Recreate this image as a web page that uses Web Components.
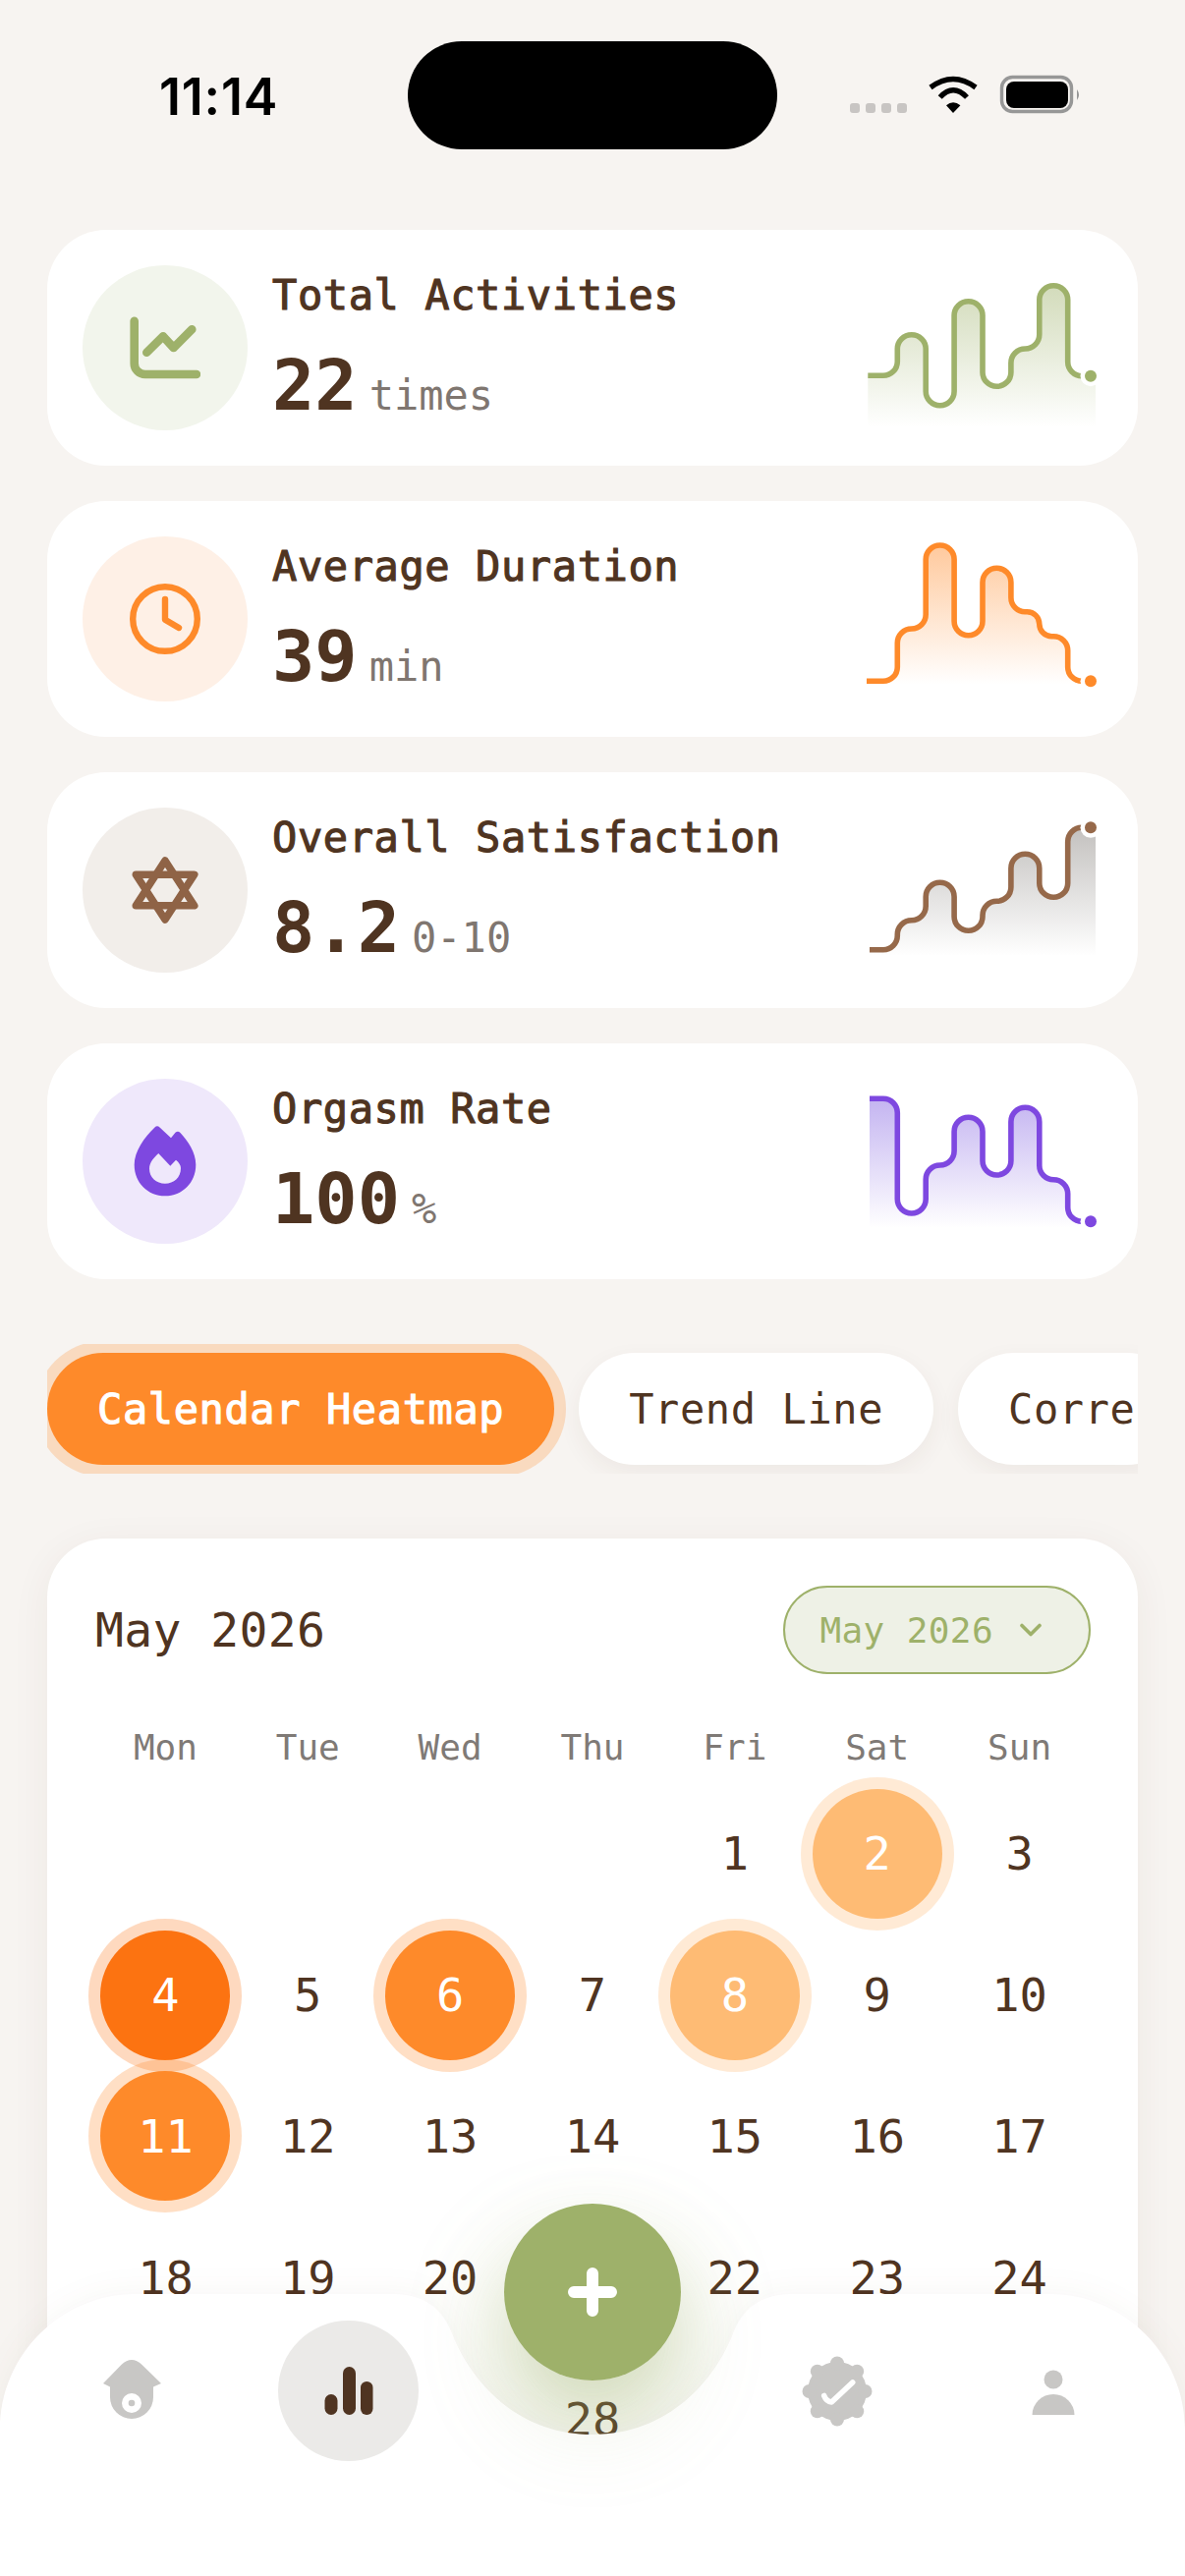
<!DOCTYPE html>
<html lang="en">
<head>
<meta charset="utf-8">
<title>Stats</title>
<style>
  html, body { margin: 0; padding: 0; }
  body {
    width: 1206px;
    height: 2622px;
    overflow: hidden;
    position: relative;
    background: #f7f4f1;
    color: #4f3421;
    font-family: "DejaVu Sans Mono", "Liberation Mono", monospace;
  }
  main { display: block; padding: 0 48px; }
  svg { display: block; }
</style>
</head>
<body>
<status-bar></status-bar>
<main>
  <stat-card label="Total Activities" value="22" unit="times" tint="#f2f5ec">
    <svg slot="icon" width="72" height="72" viewBox="0 0 72 72" fill="none" stroke="#9eb16a" stroke-width="8.6" stroke-linecap="round" stroke-linejoin="round">
      <path d="M4.7 8.7V52a11 11 0 0 0 11 11H68"/>
      <path d="M17.3 40.7L34 24.3 44.7 36 63.3 17.3"/>
    </svg>
    <spark-line slot="chart" color="#9eb16a" fill="#9eb16a" levels="118.3 76.7 148.7 42.7 129.3 91 26.7 118.7" start="1.3" bottom="171"></spark-line>
  </stat-card>
  <stat-card label="Average Duration" value="39" unit="min" tint="#fef0e6">
    <svg slot="icon" width="72" height="72" viewBox="0 0 72 72" fill="none" stroke="#fe8a2a" stroke-width="6.4" stroke-linecap="round" stroke-linejoin="round">
      <circle cx="36" cy="36" r="32.8"/>
      <path d="M36 16V36.7L50 45"/>
    </svg>
    <spark-line slot="chart" color="#fe8a2a" fill="#fe8a2a" levels="153.3 100 15 106.7 38.3 82.7 107.7 153.3" start="0" bottom="156.7"></spark-line>
  </stat-card>
  <stat-card label="Overall Satisfaction" value="8.2" unit="0-10" tint="#f2eeea">
    <svg slot="icon" width="72" height="72" viewBox="0 0 72 72" fill="none" stroke="#8f6346" stroke-width="7.6" stroke-linejoin="round">
      <path d="M36 6L65.7 51.7H6.3Z"/>
      <path d="M36 66L65.7 20.3H6.3Z"/>
    </svg>
    <spark-line slot="chart" color="#96694a" fill="#7d7873" levels="150.7 120.7 82.3 131.3 101.3 53.3 97.3 26.3" start="3" bottom="157"></spark-line>
  </stat-card>
  <stat-card label="Orgasm Rate" value="100" unit="%" tint="#efe8fb">
    <svg slot="icon" width="72" height="72" viewBox="0 0 72 72">
      <path fill="#7e48e0" fill-rule="evenodd" d="M25.5 1.5Q28 -.8 30.5 1.5L42 12.3 46.5 6.8Q49 4.5 51.5 7C59 15 67.3 27 67.3 39.5 67.3 58 53.5 71.3 36 71.3S4.7 58 4.7 39.5C4.7 26 15 11.5 25.5 1.5ZM29.3 28C25 32 20 37 20 43.5 20 52.5 27 58.7 36 58.7S52 52.5 52 43C52 40 50 37 47 34.7L41.3 40.7Z"/>
    </svg>
    <spark-line slot="chart" color="#7e48e0" fill="#7e5ce0" levels="26.3 143 94 45.3 104 35.3 108.7 151.3" start="3" bottom="158"></spark-line>
  </stat-card>
  <tab-strip>
    <tab-pill active>Calendar Heatmap</tab-pill>
    <tab-pill>Trend Line</tab-pill>
    <tab-pill clip>Correlation</tab-pill>
  </tab-strip>
  <calendar-card title-text="May 2026" first-offset="4" days="31" heat="2:1,4:3,6:2,8:1,11:2"></calendar-card>
</main>
<bottom-nav>
  <nav-item>
    <svg width="72" height="72" viewBox="0 0 72 72">
      <path fill="#c8c7c5" d="M6 28L24.5 9Q35 -1 45.5 9L65 28 57 31.5V42A22 22 0 0 1 13 42V31.5Z"/>
      <circle cx="35" cy="48" r="10" fill="#fff"/>
      <circle cx="35" cy="48" r="3.3" fill="#c8c7c5"/>
    </svg>
  </nav-item>
  <nav-item active>
    <svg width="72" height="72" viewBox="0 0 72 72" fill="#4f3421">
      <rect x="11.5" y="39" width="13" height="21" rx="6.5"/>
      <rect x="30" y="11" width="13" height="49" rx="6.5"/>
      <rect x="48" y="26" width="12.5" height="34" rx="6.2"/>
    </svg>
  </nav-item>
  <nav-item slot="right">
    <svg width="72" height="72" viewBox="0 0 72 72">
      <g fill="#c8c7c5">
        <circle cx="36" cy="36" r="30"/>
        <circle cx="36" cy="7.5" r="7"/><circle cx="56.2" cy="15.8" r="7"/><circle cx="64.5" cy="36" r="7"/><circle cx="56.2" cy="56.2" r="7"/>
        <circle cx="36" cy="64.5" r="7"/><circle cx="15.8" cy="56.2" r="7"/><circle cx="7.5" cy="36" r="7"/><circle cx="15.8" cy="15.8" r="7"/>
      </g>
      <path d="M22.7 40.5Q25 46.5 30.3 47L51.7 27" fill="none" stroke="#fff" stroke-width="5.6" stroke-linecap="round" stroke-linejoin="round"/>
    </svg>
  </nav-item>
  <nav-item slot="right">
    <svg width="72" height="72" viewBox="0 0 72 72" fill="#c8c7c5">
      <circle cx="36" cy="24" r="9.5"/>
      <path d="M14.5 60A21.5 21 0 0 1 57.5 60Z"/>
    </svg>
  </nav-item>
</bottom-nav>

<script>
class StatusBar extends HTMLElement {
  constructor() {
    super();
    this.attachShadow({ mode: 'open' });
    this.shadowRoot.innerHTML = `
      <style>
      :host { display: grid; grid-template-columns: 1fr 376px 1fr; align-items: center; height: 110px; padding-top: 42px; margin-bottom: 82px; }
      .time { padding: 3px 0 0 162px; font: 600 52px/1 Inter, "Liberation Sans", sans-serif; letter-spacing: .8px; color: #000; }
      .island { height: 110px; border-radius: 55px; background: #000; }
      .right { padding-left: 74px; }
      svg { display: block; }
      </style>
      <div class="time">11:14</div>
      <div class="island"></div>
      <div class="right">
        <svg width="236" height="44" viewBox="865 76 236 44">
          <g fill="#c8c5c3">
            <rect x="865" y="106" width="10" height="10" rx="3"/><rect x="881" y="106" width="10" height="10" rx="3"/>
            <rect x="897" y="106" width="10" height="10" rx="3"/><rect x="913" y="106" width="10" height="10" rx="3"/>
          </g>
          <g fill="none" stroke="#000" stroke-width="5.4">
            <path d="M947 90Q970 73 993 90"/>
            <path d="M956.7 100Q970 85.4 984 100"/>
          </g>
          <path d="M963 108.3Q970 102 977.4 108.3L970 116Z"/>
          <rect x="1019.5" y="79.5" width="71" height="35" rx="11" fill="none" stroke="#979797" stroke-width="3.4"/>
          <rect x="1024" y="84" width="63" height="27" rx="8"/>
          <path d="M1096 92Q1100 97.5 1096 103Z" fill="#979797"/>
        </svg>
      </div>
    `;
  }
}

class StatCard extends HTMLElement {
  constructor() {
    super();
    this.attachShadow({ mode: 'open' });
    const label = this.getAttribute('label');
    const value = this.getAttribute('value');
    const unit = this.getAttribute('unit');
    const tint = this.getAttribute('tint');
    this.shadowRoot.innerHTML = `
      <style>
      :host { display: flex; align-items: center; height: 240px; box-sizing: border-box; padding: 0 36px; margin-bottom: 36px; background: #fff; border-radius: 60px; }
      .badge { width: 168px; height: 168px; border-radius: 50%; flex: none; display: flex; align-items: center; justify-content: center; background: ${tint}; }
      .text { flex: 1; margin-left: 25px; padding-top: 4px; display: flex; flex-direction: column; }
      .label { font-size: 42px; line-height: 52px; letter-spacing: .6px; -webkit-text-stroke: 1.1px currentColor; }
      .line { display: flex; align-items: baseline; gap: 12px; margin-top: 20px; }
      .value { font-size: 72px; line-height: 90px; font-weight: 700; }
      .unit { font-size: 42px; color: #7f7670; }
      </style>
      <div class="badge"><slot name="icon"></slot></div>
      <div class="text">
        <div class="label">${label}</div>
        <div class="line"><span class="value">${value}</span><span class="unit">${unit}</span></div>
      </div>
      <slot name="chart"></slot>
    `;
  }
}

class SparkLine extends HTMLElement {
  static count = 0;

  constructor() {
    super();
    this.attachShadow({ mode: 'open' });
    const levels = this.getAttribute('levels').split(' ').map(Number);
    const color = this.getAttribute('color');
    const fill = this.getAttribute('fill');
    const start = Number(this.getAttribute('start'));
    const bottom = Number(this.getAttribute('bottom'));
    const end = 233;
    const gradId = `grad-${SparkLine.count++}`;

    // steps with rounded corners, the vertical runs sit halfway between data points
    let d = `M${start} ${levels[0]}`;
    for (let i = 0; i < levels.length - 1; i++) {
      const xv = 31.3 + i * 28.9;
      const y = levels[i];
      const ny = levels[i + 1];
      const s = ny > y ? 1 : -1;
      const r = Math.min(14.4, Math.abs(ny - y) / 2);
      d += `H${xv - r}A${r} ${r} 0 0 ${s > 0 ? 1 : 0} ${xv} ${y + s * r}`;
      d += `V${ny - s * r}A${r} ${r} 0 0 ${s > 0 ? 0 : 1} ${xv + r} ${ny}`;
    }
    d += `H${end}`;
    const last = levels[levels.length - 1];

    this.shadowRoot.innerHTML = `
      <style>
      :host { display: block; width: 240px; height: 180px; flex: none; }
      svg { display: block; }
      </style>
      <svg width="240" height="180" viewBox="0 0 240 180">
        <defs>
          <linearGradient id="${gradId}" x1="0" y1="0" x2="0" y2="1">
            <stop offset="0" stop-color="${fill}" stop-opacity=".46"/>
            <stop offset="1" stop-color="${fill}" stop-opacity="0"/>
          </linearGradient>
        </defs>
        <path d="${d}V${bottom}H${start}Z" fill="url(#${gradId})"/>
        <path d="${d}" fill="none" stroke="${color}" stroke-width="5.6"/>
        <circle cx="228" cy="${last}" r="10.5" fill="#fff"/>
        <circle cx="228" cy="${last}" r="6" fill="${color}"/>
      </svg>
    `;
  }
}

class TabStrip extends HTMLElement {
  constructor() {
    super();
    this.attachShadow({ mode: 'open' });
    this.shadowRoot.innerHTML = `
      <style>
      :host { display: flex; gap: 25px; padding: 9px 0; margin: 66px 0; overflow: hidden; }
      </style>
      <slot></slot>
    `;
  }
}

class TabPill extends HTMLElement {
  constructor() {
    super();
    this.attachShadow({ mode: 'open' });
    this.shadowRoot.innerHTML = `
      <style>
      :host { display: flex; align-items: center; flex: none; height: 114px; padding: 0 51px; border-radius: 57px; background: #fff; font-size: 42px; letter-spacing: .6px; box-shadow: 0 8px 24px rgba(80, 50, 30, .06); }
      :host([active]) { background: #fe8a2a; color: #fff; -webkit-text-stroke: 1.1px #fff; box-shadow: 0 0 0 12px rgba(254, 138, 42, .25); }
      :host([clip]) .text { width: 127px; overflow: hidden; }
      .text { white-space: nowrap; }
      </style>
      <div class="text"><slot></slot></div>
    `;
  }
}

class CalDay extends HTMLElement {
  constructor() {
    super();
    this.attachShadow({ mode: 'open' });
    this.shadowRoot.innerHTML = `
      <style>
      :host { display: flex; align-items: center; justify-content: center; font-size: 47px; }
      .dot { width: 132px; height: 132px; border-radius: 50%; display: flex; align-items: center; justify-content: center; }
      :host([level="1"]) .dot { background: #febb74; color: #fff; box-shadow: 0 0 0 12px rgba(254, 187, 116, .3); }
      :host([level="2"]) .dot { background: #fe8a2a; color: #fff; box-shadow: 0 0 0 12px rgba(254, 138, 42, .27); }
      :host([level="3"]) .dot { background: #fc7311; color: #fff; box-shadow: 0 0 0 12px rgba(252, 115, 17, .27); }
      </style>
      <div class="dot"><slot></slot></div>
    `;
  }
}

class CalendarCard extends HTMLElement {
  constructor() {
    super();
    this.attachShadow({ mode: 'open' });
    const title = this.getAttribute('title-text');
    const offset = Number(this.getAttribute('first-offset'));
    const days = Number(this.getAttribute('days'));
    const heat = Object.fromEntries(this.getAttribute('heat').split(',').map(p => p.split(':')));
    const names = ['Mon', 'Tue', 'Wed', 'Thu', 'Fri', 'Sat', 'Sun'];

    let cells = '';
    for (let i = 0; i < offset; i++) cells += '<span></span>';
    for (let d = 1; d <= days; d++) {
      cells += `<cal-day ${heat[d] ? `level="${heat[d]}"` : ''}>${d}</cal-day>`;
    }

    this.shadowRoot.innerHTML = `
      <style>
      :host { display: block; padding: 48px 48px 60px; background: #fff; border-radius: 60px; box-shadow: 0 8px 40px rgba(80, 50, 30, .06); }
      header { display: flex; align-items: center; justify-content: space-between; height: 90px; }
      h2 { margin: 0 0 0 1px; font-size: 48px; font-weight: 400; letter-spacing: .4px; }
      .picker { display: flex; align-items: center; gap: 27px; height: 90px; box-sizing: border-box; padding: 0 48px 0 35px; border: 2px solid #9eb16a; border-radius: 45px; background: #eef1e6; color: #9eb16a; font-size: 36px; letter-spacing: .4px; }
      .names { display: grid; grid-template-columns: repeat(7, 1fr); height: 74px; margin-top: 37px; align-items: center; text-align: center; font-size: 36px; color: #7f7a76; }
      .days { display: grid; grid-template-columns: repeat(7, 1fr); grid-auto-rows: 143.8px; }
      svg { display: block; }
      </style>
      <header>
        <h2>${title}</h2>
        <div class="picker">${title}
          <svg width="22" height="14" viewBox="0 0 22 14" fill="none" stroke="#9eb16a" stroke-width="3.6" stroke-linecap="round" stroke-linejoin="round"><path d="M2 2.5L11 11.5 20 2.5"/></svg>
        </div>
      </header>
      <div class="names">${names.map(n => `<span>${n}</span>`).join('')}</div>
      <div class="days">${cells}</div>
    `;
  }
}

class NavItem extends HTMLElement {
  constructor() {
    super();
    this.attachShadow({ mode: 'open' });
    this.shadowRoot.innerHTML = `
      <style>
      :host { display: flex; align-items: center; justify-content: center; width: 143px; height: 143px; border-radius: 50%; }
      :host([active]) { background: #ebeae8; }
      </style>
      <slot></slot>
    `;
  }
}

class BottomNav extends HTMLElement {
  constructor() {
    super();
    this.attachShadow({ mode: 'open' });
    this.shadowRoot.innerHTML = `
      <style>
      :host { position: absolute; left: 0; bottom: 0; width: 1206px; height: 287px; z-index: 10; }
      .glow { position: absolute; left: 513px; top: -92px; width: 180px; height: 180px; border-radius: 50%; box-shadow: 0 48px 96px rgba(158, 177, 106, .38); }
      .shape { position: absolute; left: 0; top: 0; filter: drop-shadow(0 -4px 14px rgba(80, 50, 30, .04)); }
      .row { position: relative; display: flex; gap: 77px; padding: 27px 63px 0; }
      .gap { width: 200px; flex: none; }
      .fab { position: absolute; left: 513px; top: -92px; width: 180px; height: 180px; border-radius: 50%; background: #9eb16a; display: flex; align-items: center; justify-content: center; box-shadow: 0 48px 96px rgba(158, 177, 106, .16); }
      svg { display: block; }
      </style>
      <div class="glow"></div>
      <svg class="shape" width="1206" height="287" viewBox="0 0 1206 287">
        <path fill="#fff" d="M0 287V138C0 62 62 0 138 0H400C432 0 450 15 460 40 478 87 525 143 603 143S728 87 746 40C756 15 774 0 806 0H1068C1144 0 1206 62 1206 138V287Z"/>
      </svg>
      <div class="row">
        <slot></slot>
        <div class="gap"></div>
        <slot name="right"></slot>
      </div>
      <div class="fab">
        <svg width="50" height="50" viewBox="0 0 50 50" fill="none" stroke="#fff" stroke-width="12" stroke-linecap="round"><path d="M25 6V44M6 25H44"/></svg>
      </div>
    `;
  }
}

customElements.define('status-bar', StatusBar);
customElements.define('stat-card', StatCard);
customElements.define('spark-line', SparkLine);
customElements.define('tab-strip', TabStrip);
customElements.define('tab-pill', TabPill);
customElements.define('cal-day', CalDay);
customElements.define('calendar-card', CalendarCard);
customElements.define('nav-item', NavItem);
customElements.define('bottom-nav', BottomNav);
</script>
</body>
</html>
